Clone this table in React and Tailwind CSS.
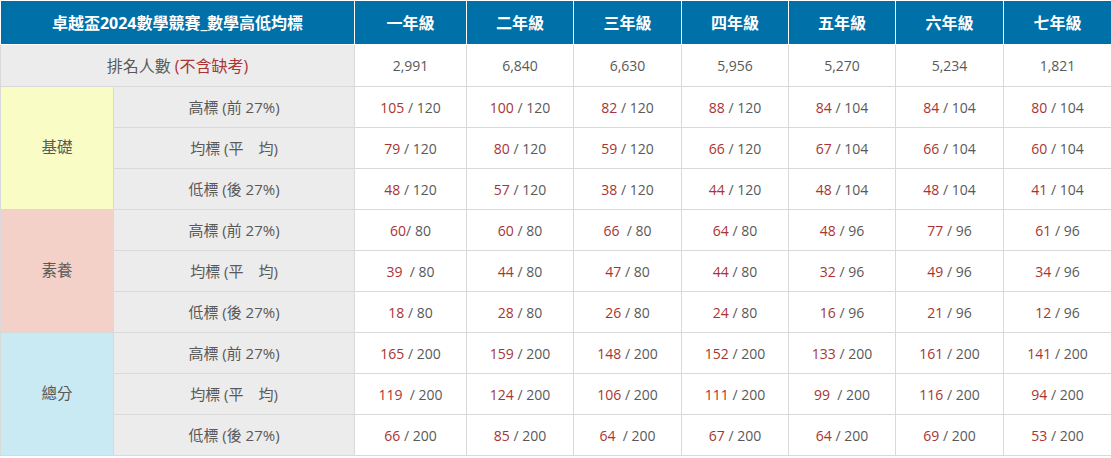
import React from "react";

const GRADES = ["一年級", "二年級", "三年級", "四年級", "五年級", "六年級", "七年級"];
const COUNTS = ["2,991", "6,840", "6,630", "5,956", "5,270", "5,234", "1,821"];

const LABELS = ["高標 (前 27%)", "均標 (平　均)", "低標 (後 27%)"];

const GROUPS = [
  {
    name: "基礎",
    bg: "bg-[#f9fcc5]",
    rows: [
      ["105 / 120", "100 / 120", "82 / 120", "88 / 120", "84 / 104", "84 / 104", "80 / 104"],
      ["79 / 120", "80 / 120", "59 / 120", "66 / 120", "67 / 104", "66 / 104", "60 / 104"],
      ["48 / 120", "57 / 120", "38 / 120", "44 / 120", "48 / 104", "48 / 104", "41 / 104"],
    ],
  },
  {
    name: "素養",
    bg: "bg-[#f3d1c8]",
    rows: [
      ["60/ 80", "60 / 80", "66  / 80", "64 / 80", "48 / 96", "77 / 96", "61 / 96"],
      ["39  / 80", "44 / 80", "47 / 80", "44 / 80", "32 / 96", "49 / 96", "34 / 96"],
      ["18 / 80", "28 / 80", "26 / 80", "24 / 80", "16 / 96", "21 / 96", "12 / 96"],
    ],
  },
  {
    name: "總分",
    bg: "bg-[#c9e9f3]",
    rows: [
      ["165 / 200", "159 / 200", "148 / 200", "152 / 200", "133 / 200", "161 / 200", "141 / 200"],
      ["119  / 200", "124 / 200", "106 / 200", "111 / 200", "99  / 200", "116 / 200", "94 / 200"],
      ["66 / 200", "85 / 200", "64  / 200", "67 / 200", "64 / 200", "69 / 200", "53 / 200"],
    ],
  },
];

function Score({ text }) {
  const m = text.match(/^(\d+)(.*)$/);
  return (
    <span className="whitespace-pre">
      <span className="text-[#a83434]">{m[1]}</span>
      <span>{m[2]}</span>
    </span>
  );
}

export default function App() {
  return (
    <div
      className="w-[1111px] h-[458px] bg-white text-[14px] text-[#595959]"
      style={{ fontFamily: '"Open Sans", "Noto Sans CJK TC", sans-serif' }}
    >
      <table className="w-[1111px] border-collapse table-fixed text-center">
        <colgroup>
          <col className="w-[113px]" />
          <col className="w-[241px]" />
          <col className="w-[112px]" />
          <col className="w-[107px]" />
          <col className="w-[108px]" />
          <col className="w-[107px]" />
          <col className="w-[107px]" />
          <col className="w-[108px]" />
          <col className="w-[108px]" />
        </colgroup>
        <thead>
          <tr className="h-[44px] bg-[#0070a9] text-white text-[16px]">
            <th colSpan={2} className="border border-white font-bold">
              卓越盃2024數學競賽_數學高低均標
            </th>
            {GRADES.map((g) => (
              <th key={g} className="border border-white font-bold">{g}</th>
            ))}
          </tr>
        </thead>
        <tbody>
          <tr className="h-[42px]">
            <td colSpan={2} className="border border-[#d9d9d9] bg-[#ececec] text-[16px]">
              排名人數 <span className="text-[#a83434]">(不含缺考)</span>
            </td>
            {COUNTS.map((c) => (
              <td key={c} className="border border-[#d9d9d9]">{c}</td>
            ))}
          </tr>
          {GROUPS.map((grp) =>
            grp.rows.map((row, i) => (
              <tr key={grp.name + i} className="h-[41px]">
                {i === 0 && (
                  <td rowSpan={3} className={`border border-[#d9d9d9] ${grp.bg} text-[15.5px]`}>
                    {grp.name}
                  </td>
                )}
                <td className="border border-[#d9d9d9] bg-[#ececec] whitespace-pre text-[15px]">{LABELS[i]}</td>
                {row.map((v, j) => (
                  <td key={j} className="border border-[#d9d9d9]">
                    <Score text={v} />
                  </td>
                ))}
              </tr>
            ))
          )}
        </tbody>
      </table>
    </div>
  );
}
